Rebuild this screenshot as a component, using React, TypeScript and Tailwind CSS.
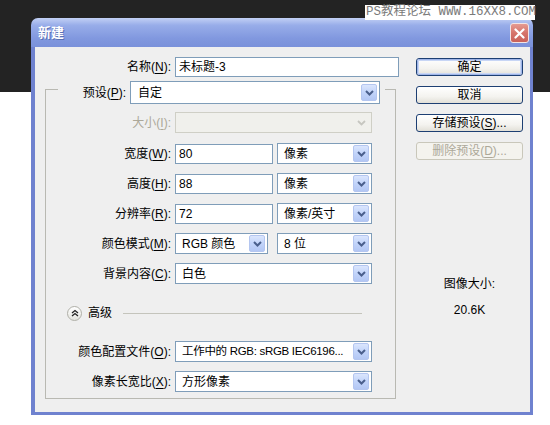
import React from "react";

const FONT = "font-['Liberation_Sans','Noto_Sans_CJK_SC',sans-serif]";

function Arrow({ disabled }: { disabled?: boolean }) {
  if (disabled) {
    return (
      <div className="w-[16px] h-[17px] shrink-0 flex items-center justify-center">
        <svg width="9" height="6" viewBox="0 0 9 6">
          <path d="M1 1 L4.5 4.5 L8 1" stroke="#c6c6c0" strokeWidth="1.8" fill="none" />
        </svg>
      </div>
    );
  }
  return (
    <div className="w-[16px] h-[17px] shrink-0 rounded-[2px] border border-[#b4c6f0] bg-[linear-gradient(to_bottom,#dbe6fd,#c2d4fa_50%,#b3c7f4)] flex items-center justify-center">
      <svg width="9" height="6" viewBox="0 0 9 6">
        <path d="M1 1 L4.5 4.5 L8 1" stroke="#4a5f8c" strokeWidth="2" fill="none" />
      </svg>
    </div>
  );
}

function Select({
  w,
  text,
  h = "h-[21px]",
  pl = "pl-[6px]",
  tc = "",
  disabled,
}: {
  w: string;
  text?: string;
  h?: string;
  pl?: string;
  tc?: string;
  disabled?: boolean;
}) {
  return (
    <div
      className={`${w} ${h} ${pl} pr-[2px] flex items-center justify-between border ${
        disabled ? "border-[#cfcfc6] bg-[#f0f0ec]" : "border-[#7f9db9] bg-white"
      }`}
    >
      <span className={`whitespace-nowrap leading-none ${tc}`}>{text}</span>
      <Arrow disabled={disabled} />
    </div>
  );
}

function Input({ w, text }: { w: string; text: string }) {
  return (
    <div className={`${w} h-[20px] pl-[3px] flex items-center border border-[#7f9db9] bg-white leading-none`}>
      {text}
    </div>
  );
}

function Label({ children, disabled }: { children: React.ReactNode; disabled?: boolean }) {
  return (
    <div
      className={`w-[129px] text-right pr-[4px] whitespace-nowrap leading-none ${
        disabled ? "text-[#aca899]" : "text-black"
      }`}
    >
      {children}
    </div>
  );
}

function U({ c }: { c: string }) {
  return <span className="underline underline-offset-[2px]">{c}</span>;
}

function Button({ children, def, disabled }: { children: React.ReactNode; def?: boolean; disabled?: boolean }) {
  if (disabled) {
    return (
      <div className="w-[107px] h-[18px] rounded-[3px] border border-[#c9c7ba] bg-[#f4f3ee] flex items-center justify-center text-[#aca899] leading-none">
        {children}
      </div>
    );
  }
  return (
    <div className="w-[107px] h-[18px] rounded-[3px] border border-[#1d3f73] bg-[linear-gradient(to_bottom,#ffffff,#f4f3ef_60%,#e2e0d8)] flex items-center justify-center text-black leading-none">
      <div
        className={`w-full h-full rounded-[2px] flex items-center justify-center ${
          def ? "border border-[#9fb5e8] shadow-[inset_0_0_0_1px_#c8d6f5]" : ""
        }`}
      >
        {children}
      </div>
    </div>
  );
}

export default function App() {
  return (
    <div
      className={`w-[550px] h-[425px] relative overflow-hidden pt-[18px] pl-[31px] bg-[linear-gradient(to_bottom,#232323_0px,#232323_92px,#ffffff_92px)] ${FONT} text-[12px]`}
    >
      {/* watermark */}
      <div className="absolute left-[365px] top-[5px] w-[170px] h-[15px] bg-white flex items-center pl-[1px] font-['Liberation_Mono','Noto_Sans_CJK_SC',monospace] text-[12.5px] text-[#7a7a7a] leading-none whitespace-nowrap">
        PS教程论坛 WWW.16XX8.COM
      </div>

      {/* dialog */}
      <div className="w-[502px] h-[397px] flex flex-col">
        {/* title bar */}
        <div className="h-[29px] rounded-t-[7px] bg-[linear-gradient(to_bottom,#c2d0f5,#98ade9_25%,#8198df_70%,#7a91da)] flex items-center justify-between pl-[7px] pr-[4px]">
          <span className="text-white font-bold text-[13px] leading-none [text-shadow:1px_1px_0_#5a6fb5]">新建</span>
          <div className="w-[19px] h-[20px] mt-[1px] rounded-[3px] border border-[#f2e4e4] bg-[linear-gradient(to_bottom,#e59b92,#d6736a_50%,#c9625a)] flex items-center justify-center">
            <svg width="11" height="11" viewBox="0 0 11 11">
              <path d="M1.5 1.5 L9.5 9.5 M9.5 1.5 L1.5 9.5" stroke="#ffffff" strokeWidth="2.2" strokeLinecap="round" />
            </svg>
          </div>
        </div>

        {/* body */}
        <div className="flex-1 bg-[#efefef] border-l-[4px] border-r-[3px] border-b-[3px] border-[#6f82cf] flex">
          {/* left column */}
          <div className="w-[364px] pt-[10px] flex flex-col">
            <div className="h-[20px] flex items-center">
              <div className="w-[137px] text-right pr-[1px] leading-none whitespace-nowrap">
                名称(<U c="N" />):
              </div>
              <div className="ml-[3px]">
                <Input w="w-[224px]" text="未标题-3" />
              </div>
            </div>

            {/* group box */}
            <div className="ml-[10px] mt-[12px] w-[351px] h-[310px] border border-[#b9b9b2] flex flex-col">
              <div className="-mt-[9px] ml-[12px] w-[327px] h-[23px] bg-[#efefef] flex items-center">
                <div className="flex-1 text-right pr-[4px] leading-none whitespace-nowrap">
                  预设(<U c="P" />):
                </div>
                <div className="mr-[5px]">
                  <Select w="w-[250px]" h="h-[23px]" pl="pl-[7px]" text="自定" />
                </div>
              </div>

              <div className="mt-[8px] h-[21px] flex items-center">
                <Label disabled>
                  大小(<U c="I" />):
                </Label>
                <Select w="w-[197px]" disabled />
              </div>

              <div className="mt-[10px] h-[21px] flex items-center">
                <Label>
                  宽度(<U c="W" />):
                </Label>
                <Input w="w-[98px]" text="80" />
                <div className="ml-[4px]">
                  <Select w="w-[95px]" text="像素" />
                </div>
              </div>

              <div className="mt-[9px] h-[21px] flex items-center">
                <Label>
                  高度(<U c="H" />):
                </Label>
                <Input w="w-[98px]" text="88" />
                <div className="ml-[4px]">
                  <Select w="w-[95px]" text="像素" />
                </div>
              </div>

              <div className="mt-[9px] h-[21px] flex items-center">
                <Label>
                  分辨率(<U c="R" />):
                </Label>
                <Input w="w-[98px]" text="72" />
                <div className="ml-[4px]">
                  <Select w="w-[95px]" text="像素/英寸" />
                </div>
              </div>

              <div className="mt-[9px] h-[21px] flex items-center">
                <Label>
                  颜色模式(<U c="M" />):
                </Label>
                <Select w="w-[93px]" text="RGB 颜色" />
                <div className="ml-[9px]">
                  <Select w="w-[95px]" text="8 位" />
                </div>
              </div>

              <div className="mt-[9px] h-[21px] flex items-center">
                <Label>
                  背景内容(<U c="C" />):
                </Label>
                <Select w="w-[197px]" text="白色" />
              </div>

              <div className="mt-[19px] h-[20px] flex items-center">
                <div className="ml-[21px] w-[15px] h-[15px] rounded-full border border-[#b0b0a8] bg-[linear-gradient(to_bottom,#ffffff,#e4e4de)] flex items-center justify-center">
                  <svg width="8" height="8" viewBox="0 0 8 8">
                    <path d="M1 4 L4 1.5 L7 4 M1 7 L4 4.5 L7 7" stroke="#222" strokeWidth="1.3" fill="none" />
                  </svg>
                </div>
                <span className="ml-[6px] leading-none">高级</span>
                <div className="ml-[11px] mr-[33px] flex-1 h-px bg-[#c4c4bc]" />
              </div>

              <div className="mt-[18px] h-[21px] flex items-center">
                <Label>
                  颜色配置文件(<U c="O" />):
                </Label>
                <Select
                  w="w-[197px]"
                  tc="text-[11.5px] tracking-[-0.3px]"
                  text="工作中的 RGB: sRGB IEC6196..."
                />
              </div>

              <div className="mt-[9px] h-[21px] flex items-center">
                <Label>
                  像素长宽比(<U c="X" />):
                </Label>
                <Select w="w-[197px]" text="方形像素" />
              </div>
            </div>
          </div>

          {/* right column */}
          <div className="pl-[17px] pt-[11px] flex flex-col">
            <div className="flex flex-col gap-[10px]">
              <Button def>确定</Button>
              <Button>取消</Button>
              <Button>
                存储预设(<U c="S" />)...
              </Button>
              <Button disabled>
                删除预设(<U c="D" />)...
              </Button>
            </div>
            <div className="w-[107px] mt-[117px] leading-[14px] text-center">图像大小:</div>
            <div className="w-[107px] mt-[12px] leading-[14px] text-center">20.6K</div>
          </div>
        </div>
      </div>
    </div>
  );
}
